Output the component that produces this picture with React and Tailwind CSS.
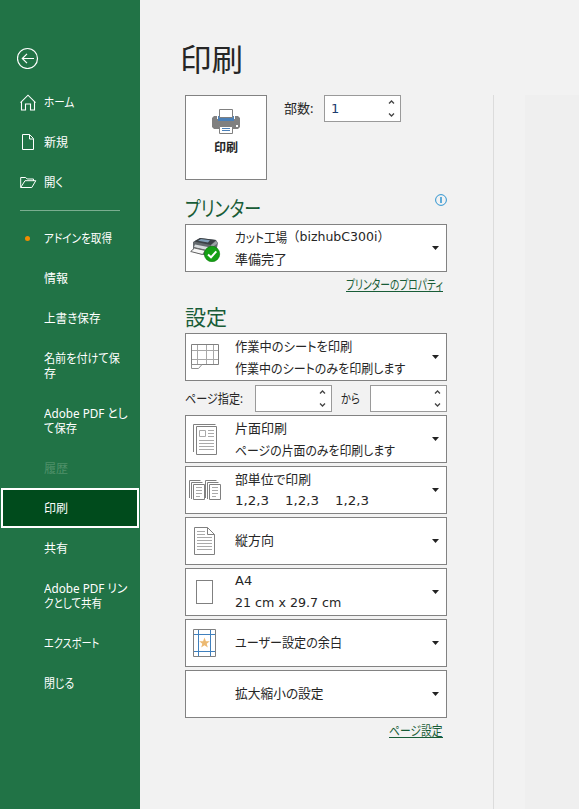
import { useLayoutEffect, useRef, useState } from "react";

// Text squeezed or stretched to a given advance width, as in a UI font with narrow kana.
function T({ w, children, full, className = "" }) {
  const ref = useRef(null);
  const [scale, setScale] = useState(1);
  useLayoutEffect(() => {
    setScale(w / ref.current.offsetWidth);
  }, [w, children]);
  return (
    <span className={"block whitespace-pre " + className} style={{ width: w }}>
      <span
        ref={ref}
        className={"inline-block origin-left " + (full ? "" : "[font-feature-settings:'palt']")}
        style={{ transform: `scaleX(${scale})` }}
      >
        {children}
      </span>
    </span>
  );
}

function NavItem({ lines, icon, active, disabled }) {
  const tall = lines.length > 1;
  return (
    <li
      className={
        "flex shrink-0 items-center " +
        (tall ? "h-[55px] " : "h-10 ") +
        (active ? "mx-px w-[138px] border-2 border-white bg-[#004b1c] pl-[17px] " : "pl-5 ") +
        (disabled ? "text-[#4f9069]" : "text-white")
      }
    >
      <span className="flex w-6 shrink-0 items-center">{icon}</span>
      <span className="block text-xs leading-[15px]">
        {lines.map(([text, w]) => (
          <T key={text} w={w}>{text}</T>
        ))}
      </span>
    </li>
  );
}

const HomeIcon = (
  <svg width="16" height="17" viewBox="0 0 16 17" fill="none" stroke="currentColor" strokeWidth="1.1">
    <path d="M.5 8.7 8 1.2l7.5 7.5M1.500 7.7v8.3h4v-6h5v6h4V7.7" />
  </svg>
);
const NewIcon = (
  <svg width="16" height="17" viewBox="0 0 16 17" fill="none" stroke="currentColor">
    <path d="M2.5.5h7l4 4v11h-11zM9.500.5v4.500h4" />
  </svg>
);
const OpenIcon = (
  <svg width="17" height="13" viewBox="0 0 17 13" fill="none" stroke="currentColor">
    <path d="M.7 11.500V1.500h5l1.500 1.500h6.300v2M.7 11.500l4.300-6.800h10.800l-4 6.800z" />
  </svg>
);
const Dot = <span className="ml-[5px] size-[5px] rounded-full bg-[#f08c00]" />;

const topNav = [
  { lines: [["ホーム", 30]], icon: HomeIcon },
  { lines: [["新規", 24]], icon: NewIcon },
  { lines: [["開く", 19]], icon: OpenIcon },
];
const nav = [
  { lines: [["アドインを取得", 68]], icon: Dot },
  { lines: [["情報", 24]] },
  { lines: [["上書き保存", 57]] },
  { lines: [["名前を付けて保", 76], ["存", 12]] },
  { lines: [["Adobe PDF とし", 84], ["て保存", 33]] },
  { lines: [["履歴", 24]], disabled: true },
  { lines: [["印刷", 24]], active: true },
  { lines: [["共有", 24]] },
  { lines: [["Adobe PDF リン", 83], ["クとして共有", 58]] },
  { lines: [["エクスポート", 55]] },
  { lines: [["閉じる", 30]] },
];

function Spin({ value, className = "" }) {
  return (
    <div className={"flex h-[27px] w-[77px] items-center justify-between border border-[#9a9a9a] bg-white pl-1.5 pr-[5px] " + className}>
      <span className="pt-px font-['DejaVu_Sans',sans-serif] text-[13px] text-[#1c3c6e]">{value}</span>
      <svg width="7" height="19" viewBox="0 0 7 19" fill="none" stroke="#444" strokeWidth="1.3">
        <path d="M1 4.500 3.500 2 6 4.500M1 14.500 3.500 17 6 14.500" />
      </svg>
    </div>
  );
}

function Card({ icon, children, single }) {
  return (
    <div className="flex h-12 w-[262px] shrink-0 items-center border border-[#828282] bg-white">
      <div className="flex h-full w-[49px] shrink-0 items-center">{icon}</div>
      <div className={"grow text-[13px] leading-[22px] text-[#262626] " + (single ? "pb-[2px]" : "")}>{children}</div>
      <svg className="mr-[7px]" width="7" height="4" viewBox="0 0 7 4"><path d="M0 0h7L3.500 4z" fill="#222" /></svg>
    </div>
  );
}

const PrinterReady = (
  <svg className="ml-1 mt-[3px]" width="31" height="25" viewBox="0 0 31 25">
    <path d="M3 5 10 1l16 2 2 3-2 9-9 4-14-4z" fill="#646a6f" />
    <path d="M4 4.500 10 1l16 2-5 5z" fill="#3b4146" />
    <path d="M8 3.800 11 2l9 1.200-2 2.300z" fill="#7f9db5" />
    <path d="M21 8l5-4 1.500 2.500-6 4z" fill="#9ba1a5" />
    <path d="M5 7.500l13 2.500-1 3L4 10z" fill="#d8dcde" />
    <path d="M.7 14.500 4.500 11l11 2.500-3 4z" fill="#f7f7f7" stroke="#666" />
    <circle cx="22" cy="17" r="7.700" fill="#14a014" stroke="#087a08" strokeWidth=".6" />
    <path d="m18 17.500 3 2.800 5.300-6" fill="none" stroke="#fff" strokeWidth="2" />
  </svg>
);
const SheetIcon = (
  <svg className="ml-[5px]" width="28" height="26" viewBox="0 0 28 26" fill="none">
    <path d="M6.500 1v20M15.500 1v20M22.500 1v20M1 6.500h26M1 15.500h26" stroke="#a8a8a8" />
    <path d="M.5 21V.5h27v20H11" stroke="#808080" />
    <path d="M.5 20.500h10.500L7.500 24.500H.5z" stroke="#909090" />
  </svg>
);
const OneSideIcon = (
  <svg className="ml-[7px]" width="25" height="31" viewBox="0 0 25 31" fill="none" stroke="#808080">
    <path d="M.5 28V.5h22M3.500 2.500h20v28h-20z" />
    <path d="M6.500 6.500h6v6h-6zM15 6.500h6M15 9.500h6M15 12.500h6M6 16.500h15M6 19.500h15M6 22.500h15M6 25.500h15" stroke="#aaa" />
  </svg>
);
const CollateIcon = (
  <svg className="ml-[3px]" width="33" height="21" viewBox="0 0 33 21" fill="none" stroke="#808080">
    {[0, 16].map((x) => (
      <g key={x} transform={`translate(${x} 0)`}>
        <path d="M.5 18V.5h11M2.500 19V2.500h11M4.500 4.500h11v15h-11z" fill="#fff" />
        <path d="M7 7.500h6M7 10.500h6M7 13.500h6M7 16.500h4" stroke="#aaa" />
      </g>
    ))}
  </svg>
);
const PortraitIcon = (
  <svg className="ml-2" width="21" height="28" viewBox="0 0 21 28" fill="none" stroke="#808080">
    <path d="M.5.5h13l7 7v20H.5zM13.500.5v7h7" />
    <path d="M3 4.500h8M3 7.500h8M3 10.500h15M3 13.500h15M3 16.500h15M3 19.500h15M3 22.500h15" stroke="#aaa" />
  </svg>
);
const PaperIcon = <span className="ml-2.5 block h-6 w-[17px] border border-[#808080]" />;
const MarginIcon = (
  <svg className="ml-[7px]" width="23" height="28" viewBox="0 0 23 28" fill="none">
    <path d="M5.500 1v26M17.500 1v26M1 5.500h21M1 22.500h21" stroke="#4080bd" />
    <path d="M.5.5h22v27H.5z" stroke="#808080" />
    <path d="m11.500 8.500 1.400 3.700 3.900.1-3.100 2.400 1.100 3.800-3.300-2.200-3.300 2.200 1.100-3.800-3.100-2.400 3.900-.1z" fill="#ecb972" />
  </svg>
);
const PrinterIcon = (
  <svg width="28" height="25" viewBox="0 0 28 25">
    <path d="M2 7h3v5h18V7h3l2 2v9l-2 2H2l-2-2V9z" fill="#808080" />
    <path d="M5 10h18v4H5z" fill="#808080" />
    <path d="M6 7h16v5H6z" fill="#4a80b8" />
    <path d="M7.500.5h13v8h-13zM7.500 17.500h13v7h-13z" fill="#fff" stroke="#808080" />
    <path d="M10 19.500h8M10 21.500h8" stroke="#4a80b8" />
    <path d="M24 16h2v2h-2z" fill="#fff" />
  </svg>
);

export default function App() {
  return (
    <div className="flex h-[809px] w-[579px] overflow-hidden bg-[#f2f2f2] font-['Noto_Sans','Noto_Sans_CJK_JP',sans-serif]">
      <aside className="flex w-[140px] shrink-0 flex-col bg-[#217346] text-white">
        <div className="h-[82px] pl-[17px] pt-[47px]">
          <svg width="22" height="22" viewBox="0 0 22 22" fill="none" stroke="#fff" strokeWidth="1.200">
            <circle cx="10.500" cy="11.500" r="10" />
            <path d="M17 11.500H5.500M10 6.800 5.300 11.500l4.700 4.700" />
          </svg>
        </div>
        <ul>{topNav.map((n) => <NavItem key={n.lines[0][0]} {...n} />)}</ul>
        <div className="mb-[7px] ml-5 mt-2 h-px w-[100px] shrink-0 bg-[#7bae90]" />
        <ul>{nav.map((n) => <NavItem key={n.lines[0][0]} {...n} />)}</ul>
      </aside>

      <main className="flex w-[353px] shrink-0 flex-col pl-[45px] text-[13px] text-[#262626]">
        <h1 className="-ml-[5px] h-[95px] pt-[35px] font-['Noto_Sans_CJK_JP',sans-serif] text-[31px] leading-[46px]">
          <T w={63}>印刷</T>
        </h1>
        <div className="flex h-[95px]">
          <button className="flex h-[85px] w-[82px] flex-col items-center border border-[#828282] bg-white pt-[13px]">
            {PrinterIcon}
            <T w={24} className="mt-[5px] text-xs font-bold leading-[18px]">印刷</T>
          </button>
          <div className="ml-[17px] flex h-[27px]">
            <T w={29} className="leading-[27px]">部数:</T>
            <Spin value="1" className="ml-[11px]" />
          </div>
        </div>
        <div className="flex h-[34px] w-[262px] justify-between text-[#185c37]">
          <T w={76} className="pt-[3px] text-[21px] leading-[30px]">プリンター</T>
          <svg className="mt-1" width="12" height="12" viewBox="0 0 12 12" fill="none" stroke="#2f94d0">
            <circle cx="6" cy="6" r="5.400" />
            <path d="M6 3v6" strokeWidth="1.500" />
          </svg>
        </div>
        <Card icon={PrinterReady}>
          <div className="flex">
            <T w={52}>カット工場</T>
            <T w={103} full className="font-['DejaVu_Sans','Noto_Sans_CJK_JP',sans-serif]">（bizhubC300i）</T>
          </div>
          <T w={52}>準備完了</T>
        </Card>
        <div className="flex h-[31px] w-[258px] justify-end pt-[3px] text-[#185c37]">
          <T w={97} className="h-[17px] border-b border-[#185c37] leading-[19px]">プリンターのプロパティ</T>
        </div>
        <div className="h-[30px] text-[21px] leading-[28px] text-[#185c37]">
          <T w={42}>設定</T>
        </div>
        <Card icon={SheetIcon}>
          <T w={117}>作業中のシートを印刷</T>
          <T w={170}>作業中のシートのみを印刷します</T>
        </Card>
        <div className="flex h-[34px] w-[262px] justify-between pt-1">
          <T w={58} className="leading-[26px]">ページ指定:</T>
          <div className="flex">
            <Spin />
            <T w={19} className="ml-[9px] mr-[10px] leading-[26px]">から</T>
            <Spin />
          </div>
        </div>
        <div className="flex flex-col gap-[3px]">
          <Card icon={OneSideIcon}>
            <T w={52}>片面印刷</T>
            <T w={160}>ページの片面のみを印刷します</T>
          </Card>
          <Card icon={CollateIcon}>
            <T w={76}>部単位で印刷</T>
            <div className="flex gap-4 font-['DejaVu_Sans',sans-serif]">
              <T w={34}>1,2,3</T>
              <T w={34}>1,2,3</T>
              <T w={34}>1,2,3</T>
            </div>
          </Card>
          <Card icon={PortraitIcon} single>
            <T w={39}>縦方向</T>
          </Card>
          <Card icon={PaperIcon}>
            <div className="font-['DejaVu_Sans',sans-serif]">
              <T w={17}>A4</T>
              <T w={106}>21 cm x 29.7 cm</T>
            </div>
          </Card>
          <Card icon={MarginIcon} single>
            <T w={107}>ユーザー設定の余白</T>
          </Card>
          <Card single>
            <T w={89}>拡大縮小の設定</T>
          </Card>
        </div>
        <div className="flex w-[258px] justify-end pt-[3px] text-[#185c37]">
          <T w={54} className="h-[17px] border-b border-[#185c37] leading-[19px]">ページ設定</T>
        </div>
      </main>

      <section className="mt-[95px] grow border-l border-[#dcdcdc] pl-[31px]">
        <div className="h-full bg-[#efefef]" />
      </section>
    </div>
  );
}
